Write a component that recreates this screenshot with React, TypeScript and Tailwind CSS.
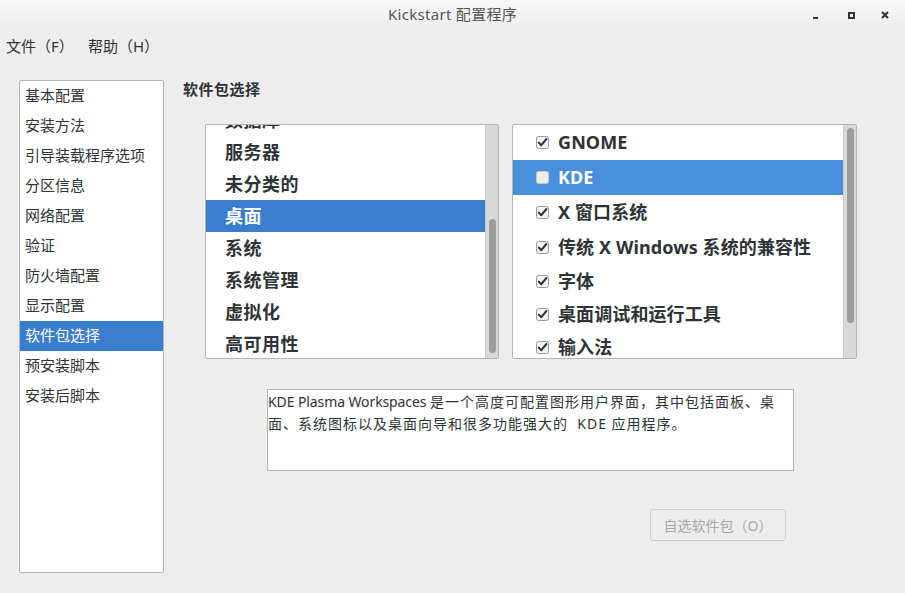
import React from "react";

const FONT = { fontFamily: '"Noto Sans", "Noto Sans CJK SC", sans-serif' };

/* ---------------- small drawings ---------------- */
const CheckBox = ({ checked }: { checked: boolean }) => (
  <svg width="13" height="13" viewBox="0 0 13 13" className="shrink-0">
    <rect x="0.5" y="0.5" width="12" height="12" rx="2" fill={checked ? "#f2f2f2" : "#ededed"} stroke={checked ? "#9a9a9a" : "#c8c8c8"} />
    {checked && <path d="M2.8 6.6 L5.3 9.2 L10.4 3" fill="none" stroke="#2e3436" strokeWidth="2" strokeLinecap="round" strokeLinejoin="round" />}
  </svg>
);

const Scrollbar = ({ top, height }: { top: number; height: number }) => (
  <div className="w-[13px] shrink-0 bg-[#d9d9d9] border-l border-[#c9c9c9] flex flex-col items-center">
    <div className="w-[7px] rounded-full bg-[#9d9d9d]" style={{ marginTop: top, height }} />
  </div>
);

/* ---------------- data ---------------- */
const sections = [
  "基本配置",
  "安装方法",
  "引导装载程序选项",
  "分区信息",
  "网络配置",
  "验证",
  "防火墙配置",
  "显示配置",
  "软件包选择",
  "预安装脚本",
  "安装后脚本",
];

const groups = ["数据库", "服务器", "未分类的", "桌面", "系统", "系统管理", "虚拟化", "高可用性"];

const packages: { name: string; checked: boolean; h: string }[] = [
  { name: "GNOME", checked: true, h: "h-[35px]" },
  { name: "KDE", checked: false, h: "h-[35px]" },
  { name: "X 窗口系统", checked: true, h: "h-[35px]" },
  { name: "传统 X Windows 系统的兼容性", checked: true, h: "h-[34px]" },
  { name: "字体", checked: true, h: "h-[34px]" },
  { name: "桌面调试和运行工具", checked: true, h: "h-[32px]" },
  { name: "输入法", checked: true, h: "h-[34px]" },
];

export default function App() {
  return (
    <div className="w-[905px] h-[593px] bg-[#ededed] text-[#2e3436] flex flex-col overflow-hidden" style={FONT}>
      {/* title bar */}
      <div className="h-[30px] shrink-0 grid grid-cols-[1fr_auto_1fr] items-center bg-gradient-to-b from-[#f8f8f8] to-[#ececec]">
        <div />
        <div className="text-[15px] text-[#555753] tracking-[0.3px] -mt-[2px]">Kickstart 配置程序</div>
        <div className="flex justify-end items-center h-full">
          <div className="w-[36px] flex justify-center pt-[5px]">
            <div className="w-[5px] h-[2px] bg-[#2e3436]" />
          </div>
          <div className="w-[36px] flex justify-center">
            <div className="w-[7px] h-[7px] border-2 border-[#2e3436]" />
          </div>
          <div className="w-[36px] flex justify-center pr-[4px]">
            <svg width="8" height="8" viewBox="0 0 8 8">
              <path d="M1 1 L7 7 M7 1 L1 7" stroke="#2e3436" strokeWidth="2" />
            </svg>
          </div>
        </div>
      </div>

      {/* menu bar */}
      <div className="h-[32px] shrink-0 flex items-center pl-[6px] text-[15px]">
        <span className="w-[82px]">文件（F）</span>
        <span>帮助（H）</span>
      </div>

      {/* main */}
      <div className="flex pl-[19px] pt-[18px]">
        {/* sidebar list */}
        <div className="w-[145px] h-[493px] bg-white border border-[#b4b4b4] rounded-[2px] overflow-hidden">
          {sections.map((s) => (
            <div
              key={s}
              className={`h-[30px] flex items-center pl-[5px] pb-[2px] text-[15px] ${
                s === "软件包选择" ? "bg-[#3b7ecd] text-white" : ""
              }`}
            >
              {s}
            </div>
          ))}
        </div>

        {/* content */}
        <div className="ml-[19px] flex flex-col">
          <div className="h-[18px] flex items-center text-[15px] font-bold tracking-[0.5px]">软件包选择</div>

          <div className="flex mt-[26px] ml-[22px] gap-[13px]">
            {/* groups */}
            <div className="w-[294px] h-[235px] bg-white border border-[#b4b4b4] rounded-[2px] overflow-hidden flex">
              <div className="flex-1 flex flex-col -mt-[21px]">
                {groups.map((g) => (
                  <div
                    key={g}
                    className={`h-[32px] shrink-0 flex items-center pl-[19px] text-[18px] font-bold tracking-[0.5px] ${
                      g === "桌面" ? "bg-[#3b7ecd] text-white" : "text-[#2e3436]"
                    }`}
                  >
                    {g}
                  </div>
                ))}
              </div>
              <Scrollbar top={94} height={134} />
            </div>

            {/* packages */}
            <div className="w-[345px] h-[235px] bg-white border border-[#b4b4b4] rounded-[2px] overflow-hidden flex">
              <div className="flex-1 flex flex-col">
                {packages.map((p) => (
                  <div
                    key={p.name}
                    className={`${p.h} shrink-0 flex items-center pl-[23px] gap-[9px] text-[18px] font-bold tracking-[0.1px] ${
                      p.checked ? "text-[#2e3436]" : "bg-[#4a8fd9] text-white"
                    }`}
                  >
                    <CheckBox checked={p.checked} />
                    <span>{p.name}</span>
                  </div>
                ))}
              </div>
              <Scrollbar top={3} height={195} />
            </div>
          </div>

          {/* description */}
          <div className="mt-[30px] ml-[84px] w-[527px] h-[82px] bg-white border border-[#b4b4b4] pt-[1px] text-[14px] leading-[22px] whitespace-nowrap">
            <span className="tracking-[-0.1px]">KDE Plasma Workspaces </span>
            <span className="tracking-[1px]">是一个高度可配置图形用户界面，其中包括面板、桌</span>
            <br />
            <span className="tracking-[1px]">面、系统图标以及桌面向导和很多功能强大的 &nbsp;KDE 应用程序。</span>
          </div>

          {/* button */}
          <div className="mt-[38px] ml-[467px] w-[136px] h-[32px] border border-[#cdcdcd] rounded-[3px] bg-[#ededed] flex items-center justify-center text-[14px] text-[#a8a8a8]">
            自选软件包（O）
          </div>
        </div>
      </div>
    </div>
  );
}
